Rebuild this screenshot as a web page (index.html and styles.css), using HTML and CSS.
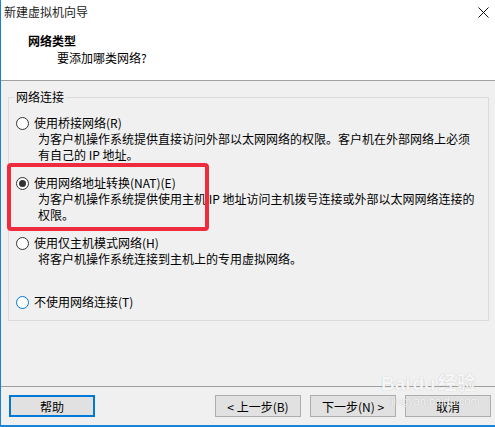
FILE: index.html
```html
<!DOCTYPE html>
<html lang="zh-CN">
<head>
    <meta charset="UTF-8">
    <meta name="viewport" content="width=device-width, initial-scale=1.0">
    <title>新建虚拟机向导</title>
    <link rel="stylesheet" href="styles.css">
</head>
<body>
    <div class="window">
        <div class="top">
            <div class="titlebar">
                <span class="title">新建虚拟机向导</span>
                <svg class="close" width="11" height="11" viewBox="0 0 11 11">
                    <path d="M0.5 0.5 L10.5 10.5 M10.5 0.5 L0.5 10.5" stroke="#111" stroke-width="1" fill="none"/>
                </svg>
            </div>
            <div class="header">
                <div class="heading">网络类型</div>
                <div class="subheading">要添加哪类网络?</div>
            </div>
        </div>

        <div class="content">
            <fieldset class="group">
                <legend>网络连接</legend>

                <div class="option first">
                    <div class="option-label"><span class="radio"></span>使用桥接网络(R)</div>
                    <div class="option-desc">为客户机操作系统提供直接访问外部以太网网络的权限。客户机在外部网络上必须<br>有自己的 IP 地址。</div>
                </div>

                <div class="option">
                    <div class="option-label"><span class="radio checked"></span>使用网络地址转换(NAT)(E)</div>
                    <div class="option-desc">为客户机操作系统提供使用主机 IP 地址访问主机拨号连接或外部以太网网络连接的<br>权限。</div>
                </div>

                <div class="option">
                    <div class="option-label"><span class="radio"></span>使用仅主机模式网络(H)</div>
                    <div class="option-desc">将客户机操作系统连接到主机上的专用虚拟网络。</div>
                </div>

                <div class="option last">
                    <div class="option-label"><span class="radio focus"></span>不使用网络连接(T)</div>
                </div>
            </fieldset>

            <div class="highlight"></div>
        </div>

        <div class="footer">
            <button class="btn default">帮助</button>
            <div class="nav">
                <button class="btn">&lt; 上一步(B)</button>
                <button class="btn">下一步(N) &gt;</button>
                <button class="btn">取消</button>
            </div>
            <div class="watermark">
                <span class="wm-logo">Bai<span class="paw">du</span>经验</span>
                <span class="wm-url">jingyan.baidu.com</span>
            </div>
        </div>
    </div>
</body>
</html>
```

FILE: styles.css
```css
/* 向导窗口 */
body {
    margin: 0;
    font-family: "Noto Sans CJK SC", sans-serif;
    font-size: 12px;
    color: #000;
    background-color: #f0f0f0;
}

.window {
    width: 494px;
    height: 425px;
    border-left: 1px solid #1883d7;
    border-bottom: 2px solid #1883d7;
    display: flex;
    flex-direction: column;
    position: relative;
}

.top {
    background-color: #fff;
    height: 80px;
    border-bottom: 1px solid #a0a0a0;
}

.titlebar {
    height: 24px;
    display: flex;
    align-items: center;
    justify-content: space-between;
    padding: 0 6px 0 3px;
}

.title {
    color: #222;
    line-height: 24px;
}

.close {
    margin-top: 1px;
}

.header {
    padding: 9px 0 0 27px;
}

.heading {
    font-weight: bold;
    line-height: 16px;
}

.subheading {
    line-height: 16px;
    padding-left: 29px;
    margin-top: 1px;
}

.content {
    position: relative;
    flex: 1;
}

.group {
    margin: 8px 6px 0 7px;
    padding: 10px 0 10px 0;
    border: 1px solid #dcdcdc;
    min-width: 0;
}

.group legend {
    margin-left: 5px;
    padding: 0 2px;
    line-height: 16px;
}

.option {
    margin-top: 12px;
}

.option.first {
    margin-top: 0;
}

.option.last {
    margin-top: 27px;
}

.option-label {
    display: flex;
    align-items: center;
    line-height: 16px;
    padding-left: 7px;
}

.radio {
    width: 11px;
    height: 11px;
    border: 1px solid #333;
    border-radius: 50%;
    background-color: #fff;
    margin-right: 5px;
    position: relative;
    flex-shrink: 0;
}

.radio.checked::after {
    content: "";
    position: absolute;
    left: 2px;
    top: 2px;
    width: 7px;
    height: 7px;
    border-radius: 50%;
    background-color: #333;
}

.radio.focus {
    border-color: #0078d7;
}

.option-desc {
    padding-left: 29px;
    line-height: 16px;
}

.highlight {
    position: absolute;
    left: 6px;
    top: 82px;
    width: 194px;
    height: 60px;
    border: 4px solid #f02b3e;
    border-radius: 4px;
}

.footer {
    border-top: 1px solid #a0a0a0;
    padding: 8px 4px 8px 8px;
    display: flex;
    justify-content: space-between;
    position: relative;
}

.nav {
    display: flex;
    gap: 9px;
}

.btn {
    width: 86px;
    height: 22px;
    padding: 0;
    font-family: inherit;
    font-size: 12px;
    color: #000;
    background-color: #e1e1e1;
    border: 1px solid #adadad;
}

.btn.default {
    border: 2px solid #0078d7;
}

.watermark {
    position: absolute;
    left: 376px;
    top: -14px;
    display: flex;
    flex-direction: column;
    align-items: center;
    color: rgba(255, 255, 255, 0.9);
    text-shadow: 0 0 1px rgba(0, 0, 0, 0.25);
    pointer-events: none;
}

.wm-logo {
    font-family: "Liberation Sans", "Noto Sans CJK SC", sans-serif;
    font-size: 19px;
    font-weight: bold;
    line-height: 22px;
}

.paw {
    padding: 0 2px;
}

.wm-url {
    font-family: "Liberation Sans", sans-serif;
    font-size: 11px;
    line-height: 12px;
    margin-left: 14px;
}
```
